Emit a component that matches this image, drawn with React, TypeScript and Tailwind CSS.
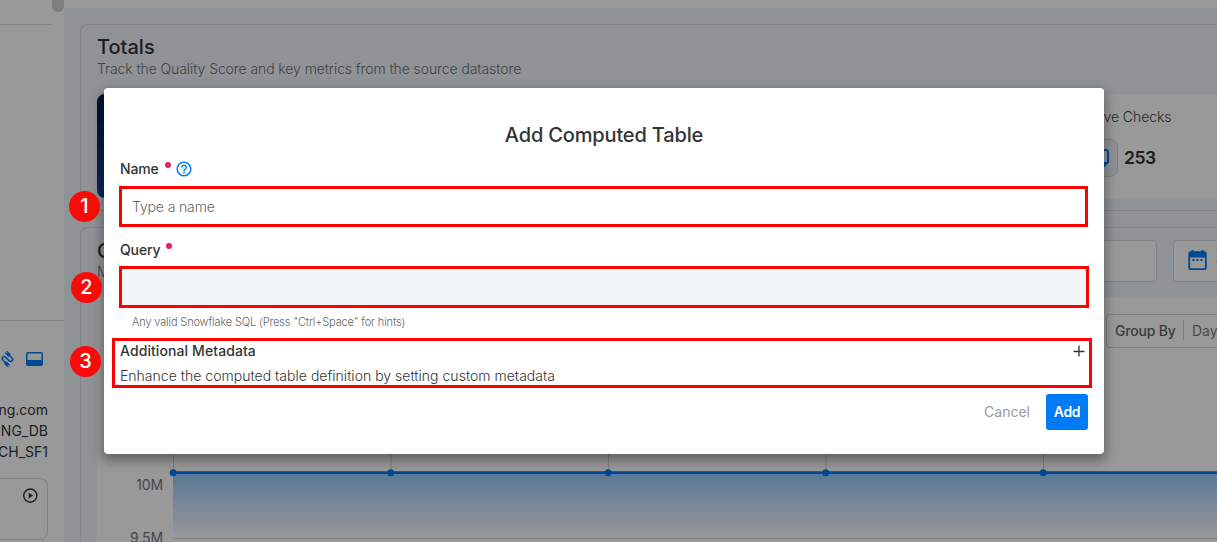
import type { ReactNode } from "react";

function Cable() {
  return (
    <svg className="shrink-0" width="16" height="16" viewBox="0 0 16 16" fill="none" stroke="#007bf5" strokeWidth="1.5">
      <g transform="translate(-.6 0) rotate(-45 8 8)">
        <path d="M4 11V5.500a2 2 0 0 1 4 0v5a2 2 0 0 0 4 0V5" />
        <path d="M2.300 9h3.400v3.500H2.300zM10.300 3.500h3.400V7h-3.400z" fill="#007bf5" stroke="none" />
        <path d="M3 12v2.500M5 12v2.500M11 4V1.500M13 4V1.500" strokeWidth="1" />
      </g>
    </svg>
  );
}

function Sidebar() {
  return (
    <aside className="flex h-[542px] w-16 shrink-0 flex-col overflow-hidden bg-white">
      <div className="flex h-6 justify-end">
        <div className="h-3 w-3 rounded-b-full bg-[#d2d2d2]" />
      </div>
      <div className="h-px w-[52px] bg-[#dedede]" />
      <div className="mt-[295px] h-px w-16 bg-[#d8d8d8]" />
      <div className="mt-[30px] flex h-4 items-center gap-[10px]">
        <Cable />
        <svg className="shrink-0" width="17" height="14" viewBox="0 0 17 14">
          <rect x="0.75" y="0.75" width="15.5" height="12.5" rx="1.3" fill="none" stroke="#007bf5" strokeWidth="1.5" />
          <path d="M1 8h15v5H1z" fill="#007bf5" />
        </svg>
      </div>
      <div className="mt-[32px] flex w-12 flex-col items-end text-[14px] leading-[21px] whitespace-nowrap text-[#333]">
        <span>staging.com</span>
        <span>STAGING_DB</span>
        <span>TPCH_SF1</span>
      </div>
      <div className="mt-4 flex h-[62px] w-12 shrink-0 justify-end rounded-r-lg border border-l-0 border-[#d8d8d8] pt-[9px] pr-[9px]">
        <svg width="16" height="16" viewBox="0 0 16 16">
          <circle cx="8.300" cy="7.600" r="6.6" fill="none" stroke="#333" strokeWidth="1.4" />
          <path d="M6.600 4.700v5.800l4.500-2.900z" fill="#333" />
        </svg>
      </div>
    </aside>
  );
}

function TotalsCard() {
  return (
    <section className="h-[187px] rounded-l-lg border border-r-0 border-[#d6dbe0] pt-2 pl-4">
      <h2 className="h-7 text-[20px] leading-7 font-medium text-[#333]">Totals</h2>
      <p className="h-4 text-[14px] leading-4 font-light tracking-[-0.09px] whitespace-nowrap text-[#6f6f6f]">
        Track the Quality Score and key metrics from the source datastore
      </p>
      <div className="mt-[17px] flex h-[104px] justify-between">
        <div className="w-60 rounded-lg bg-gradient-to-b from-[#001c4f] to-[#12459c]" />
        <div className="w-[170px] bg-white pt-3 pl-8">
          <div className="text-[14px] leading-[22px] font-light tracking-[-0.05px] text-[#444]">Active Checks</div>
          <div className="mt-[11px] flex items-center gap-[6px]">
            <div className="flex h-[38px] w-[39px] items-center justify-end rounded-lg border border-[#cfd8e2] bg-[#f0f5fa] pr-[8px]">
              <svg width="20" height="20" viewBox="0 0 20 20" fill="none" stroke="#007bf5" strokeWidth="2">
                <path d="M2 2h15a2 2 0 0 1 2 2v10l-4 4H2z" />
                <path d="M19 14h-5v5z" fill="#007bf5" stroke="none" />
              </svg>
            </div>
            <span className="text-[17.5px] font-semibold tracking-[-0.5px] text-[#333]">253</span>
          </div>
        </div>
      </div>
    </section>
  );
}

function TrendCard() {
  const xs = [76, 293.5, 511, 728.5, 946];
  return (
    <section className="mt-4 h-[340px] rounded-tl-lg border border-r-0 border-b-0 border-[#d6dbe0] pt-3 pl-4">
      <div className="flex h-[58px] justify-between">
        <div>
          <h2 className="-mt-px text-[20px] leading-6 font-medium text-[#333]">Overview</h2>
          <p className="mt-px text-[14px] leading-4 font-light text-[#6f6f6f]">Monitor totals</p>
        </div>
        <div className="flex h-[42px] gap-4">
          <div className="w-[200px] rounded border border-[#d6dbe0] bg-white" />
          <div className="flex w-11 overflow-hidden rounded-l border border-r-0 border-[#d6dbe0] bg-white pt-2 pl-[14px]">
            <svg className="shrink-0" width="20" height="22" viewBox="0 0 20 22">
              <rect x="1.2" y="3.2" width="16.6" height="17" rx="1.3" fill="none" stroke="#007bf5" strokeWidth="1.8" />
              <path d="M1 3h17v5.500H1zM3.500 1h2v3h-2zM13.500 1h2v3h-2zM4.500 10h2v2h-2zM8.500 10h2v2h-2zM12.500 10h2v2h-2z" fill="#007bf5" />
            </svg>
            <div className="ml-2 flex flex-col text-[#333]">
              <span className="text-[11px] leading-[10px] font-light">Timeframe</span>
              <span className="text-[14px] leading-[16px]">7 days</span>
            </div>
          </div>
        </div>
      </div>
      <div className="relative h-[270px] overflow-hidden bg-white">
        <svg className="absolute inset-0" width="1120" height="270">
          <defs>
            <linearGradient id="area" x1="0" y1="0" x2="0" y2="1">
              <stop offset="0" stopColor="#96c8fb" />
              <stop offset="1" stopColor="#fdfdfd" />
            </linearGradient>
          </defs>
          {xs.map((x) => (
            <path key={x} d={`M${x + 0.5} 150V241`} stroke="#d2d2d2" />
          ))}
          <path d="M76 240.5H1120" stroke="#d2d2d2" />
          <path d="M76 175H1120V240H76z" fill="url(#area)" />
          <path d="M76 174.6H1120" stroke="#007bf5" strokeWidth="2.8" />
          {xs.map((x) => (
            <circle key={x} cx={x + 0.2} cy="174.7" r="3.5" fill="#007bf5" />
          ))}
        </svg>
        <div className="flex justify-end pt-4">
          <div className="flex h-[34px] w-[111px] items-center overflow-hidden rounded-l border border-r-0 border-[#d2d2d2] pb-0.5 pl-2 text-[14px] whitespace-nowrap">
            <span className="w-[68px] shrink-0 font-medium tracking-[-0.2px] text-[#666]">Group By</span>
            <span className="h-5 w-px shrink-0 bg-[#d2d2d2]" />
            <span className="pl-2 text-[#808080]">Day</span>
          </div>
        </div>
        <div className="mt-[110px] flex w-[66px] flex-col items-end text-[14px] leading-[53px] tracking-[-0.1px] text-[#777]">
          <span>10M</span>
          <span>9.5M</span>
        </div>
      </div>
    </section>
  );
}

function Label({ children }: { children: ReactNode }) {
  return (
    <div className="flex h-5 items-center text-[14px] font-medium tracking-[-0.15px] text-[#333]">
      {children}
      <span className="mb-[7px] ml-[6px] h-[6px] w-[6px] rounded-full bg-[#e91e63]" />
    </div>
  );
}

function Dialog() {
  return (
    <div className="absolute top-[88px] left-[104px] flex h-[366px] w-[1000px] flex-col rounded bg-white shadow-[0_5px_12px_2px_rgba(0,0,0,0.35)]">
      <h1 className="mt-8 text-center text-[20px] leading-[30px] font-medium tracking-[-0.16px] text-[#333]">
        Add Computed Table
      </h1>
      <div className="mt-2 ml-4 flex gap-1">
        <Label>Name</Label>
        <svg className="mt-[2px]" width="18" height="18" viewBox="0 0 24 24" fill="#007bf5">
          <path d="M11 18h2v-2h-2v2zm1-16C6.48 2 2 6.48 2 12s4.48 10 10 10 10-4.48 10-10S17.52 2 12 2zm0 18c-4.41 0-8-3.590-8-8s3.590-8 8-8 8 3.590 8 8-3.590 8-8 8zm0-14c-2.210 0-4 1.790-4 4h2c0-1.100.9-2 2-2s2 .9 2 2c0 2-3 1.750-3 5h2c0-2.250 3-2.500 3-5 0-2.210-1.790-4-4-4z" />
        </svg>
      </div>
      <div className="mt-2 ml-[15px] flex h-[41px] w-[969px] items-center border-[3px] border-[#fd0000] pl-[10px] text-[14px] font-light tracking-[-0.13px] text-[#666]">
        Type a name
      </div>
      <div className="mt-3 ml-4">
        <Label>Query</Label>
      </div>
      <div className="mt-[7px] ml-[15px] h-[42px] w-[970px] border-[3px] border-[#fd0000] bg-[#f0f5fa]" />
      <p className="mt-[6px] ml-7 h-4 text-[11px] leading-4 font-light tracking-[-0.15px] text-[#666]">
        Any valid Snowflake SQL (Press "Ctrl+Space" for hints)
      </p>
      <div className="mt-2 ml-2 flex h-[50px] w-[980px] shrink-0 flex-col border-[3px] border-[#fd0000] pl-[5px] text-[14px]">
        <div className="flex h-[19px] items-center justify-between pr-1 font-medium tracking-[0.09px] text-[#333]">
          <span>Additional Metadata</span>
          <svg width="12" height="12" viewBox="0 0 12 12" stroke="#333" strokeWidth="1.3">
            <path d="M6 .5v11M.5 6.500h11" />
          </svg>
        </div>
        <div className="mt-[5px] leading-[21px] font-light tracking-[0.02px] text-[#333]">
          Enhance the computed table definition by setting custom metadata
        </div>
      </div>
      <div className="mt-[6px] mr-4 flex items-center justify-end gap-4 text-[14px]">
        <span className="pb-0.5 text-[#9a9a9a]">Cancel</span>
        <button className="h-9 w-[42px] rounded-[3px] bg-[#007bf5] pb-0.5 font-semibold tracking-[-0.3px] text-white">
          Add
        </button>
      </div>
    </div>
  );
}

function Badge({ n, className }: { n: number; className: string }) {
  return (
    <div className={`absolute flex h-[31px] w-[31px] items-center justify-center rounded-full bg-[#fb0a0a] pb-0.5 text-[20px] leading-none font-medium text-white ${className}`}>
      {n}
    </div>
  );
}

export default function App() {
  return (
    <div className="relative flex h-[542px] w-[1217px] overflow-hidden bg-white font-['Inter',sans-serif]">
      <Sidebar />
      <main className="min-w-0 flex-1 bg-[#f0f5fa]">
        <div className="mb-4 h-2 bg-white" />
        <div className="pl-4">
          <TotalsCard />
          <TrendCard />
        </div>
      </main>
      <div className="absolute inset-0 bg-black/40" />
      <Dialog />
      <Badge n={1} className="top-[191px] left-[69px]" />
      <Badge n={2} className="top-[272px] left-[71px]" />
      <Badge n={3} className="top-[346px] left-[70px]" />
    </div>
  );
}
